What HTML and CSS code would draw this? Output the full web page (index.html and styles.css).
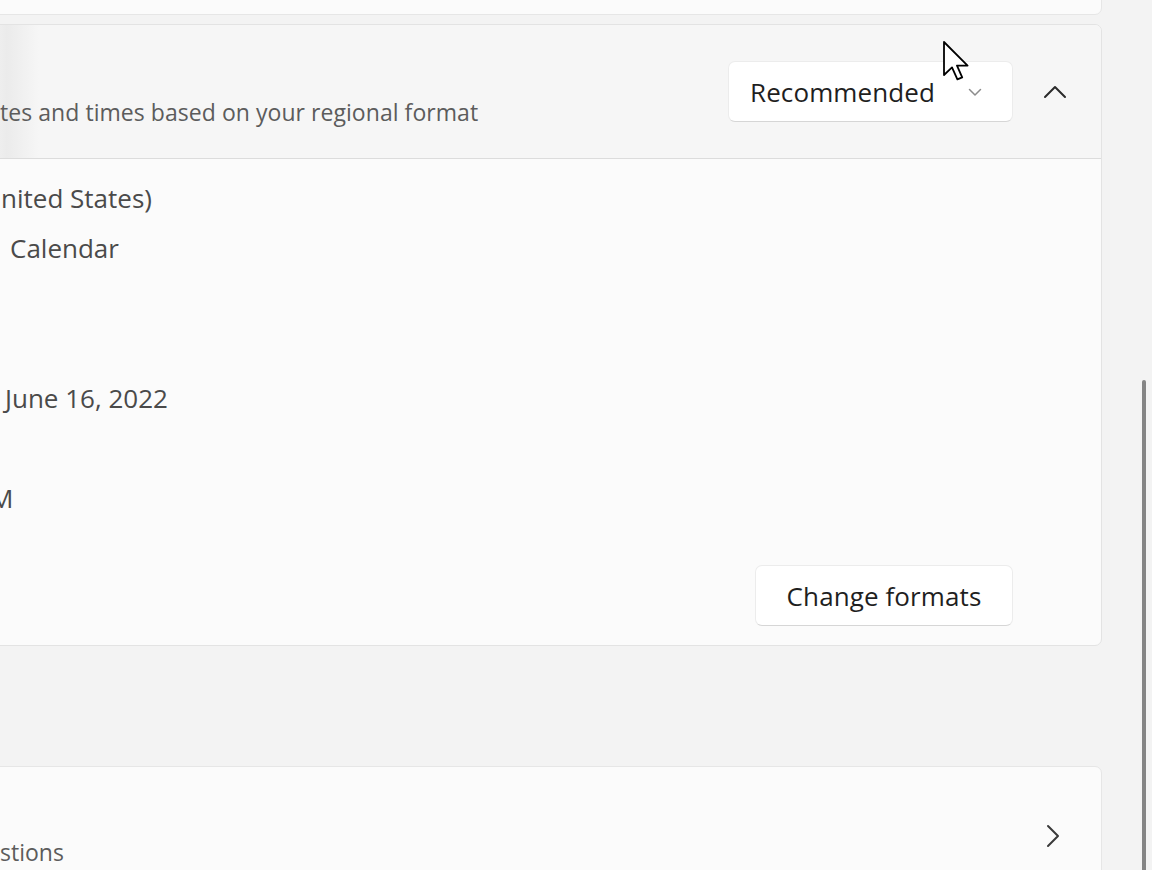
FILE: index.html
```html
<!DOCTYPE html>
<html lang="en">
<head>
<meta charset="utf-8">
<title>Region settings</title>
<link rel="stylesheet" href="styles.css">
</head>
<body>
<div class="column">
  <div class="card card-top"></div>

  <section class="expander">
    <div class="exp-header">
      <div class="exp-text">
        <div class="exp-sub">tes and times based on your regional format</div>
      </div>
      <div class="exp-actions">
        <button class="dropdown">
          <span class="dropdown-label">Recommended</span>
          <svg class="dd-chev" width="14" height="9" viewBox="0 0 14 9"><path d="M1.5 1.5 L7 7 L12.5 1.5" fill="none" stroke="#8c8c8c" stroke-width="1.5" stroke-linecap="round" stroke-linejoin="round"/></svg>
        </button>
        <span class="exp-toggle">
          <svg width="24" height="14" viewBox="0 0 24 14"><path d="M2 12 L12 2 L22 12" fill="none" stroke="#2b2b2b" stroke-width="2" stroke-linecap="round" stroke-linejoin="round"/></svg>
        </span>
      </div>
    </div>
    <div class="exp-body">
      <ul class="values">
        <li><span class="v v-region">nited States)</span></li>
        <li><span class="v v-cal">Calendar</span></li>
        <li><span class="v"></span></li>
        <li><span class="v"></span></li>
        <li><span class="v v-long">June 16, 2022</span></li>
        <li><span class="v"></span></li>
        <li><span class="v v-time">M</span></li>
      </ul>
      <div class="body-actions">
        <button class="btn">Change formats</button>
      </div>
    </div>
  </section>

  <section class="card card-link">
    <div class="link-text">
      <div class="link-sub">stions</div>
    </div>
    <svg class="link-chev" width="14" height="24" viewBox="0 0 14 24"><path d="M2 2 L12 12 L2 22" fill="none" stroke="#3a3a3a" stroke-width="2" stroke-linecap="round" stroke-linejoin="round"/></svg>
  </section>
</div>

<div class="scrollbar"></div>

<svg class="cursor" width="26" height="40" viewBox="0 0 13 20">
  <path d="M0.5 0.5 L0.5 17 L4.5 13.2 L7.2 19.2 L9.6 18.2 L7 12.3 L12.3 12.3 Z" fill="#ffffff" stroke="#000000" stroke-width="0.9" stroke-linejoin="round"/>
</svg>
</body>
</html>
```

FILE: styles.css
```css
html, body {
  margin: 0;
  padding: 0;
}

body {
  width: 1152px;
  height: 870px;
  overflow: hidden;
  background: #f3f3f3;
  font-family: "Open Sans", "Noto Sans", "Liberation Sans", sans-serif;
  color: #1b1b1b;
  position: relative;
}

.column {
  margin-left: -20px;
  width: 1122px;
  display: flex;
  flex-direction: column;
}

.card {
  background: #fbfbfb;
  border: 1px solid #e6e6e6;
  border-radius: 7px;
  box-sizing: border-box;
}

.card-top {
  height: 55px;
  margin-top: -40px;
}

.expander {
  margin-top: 9px;
  border: 1px solid #e3e3e3;
  border-radius: 7px;
  background: #fbfbfb;
  overflow: hidden;
}

.exp-header {
  height: 133px;
  background: linear-gradient(90deg, #f6f6f6 0px, #ebebeb 26px, #f6f6f6 58px, #f6f6f6 100%);
  border-bottom: 1px solid #dcdcdc;
  display: flex;
  align-items: center;
  justify-content: space-between;
  padding-right: 25px;
}

.exp-text {
  padding-left: 19px;
  padding-top: 40px;
}

.exp-sub {
  font-size: 23px;
  color: #5c5c5c;
  letter-spacing: 0.05px;
}

.exp-actions {
  display: flex;
  align-items: center;
  gap: 21px;
}

.dropdown {
  width: 285px;
  height: 61px;
  box-sizing: border-box;
  background: #ffffff;
  border: 1px solid #ececec;
  border-bottom-color: #d6d6d6;
  border-radius: 7px;
  display: flex;
  align-items: center;
  justify-content: space-between;
  padding: 0 30px 0 21px;
  font-family: inherit;
  cursor: default;
}

.dropdown-label {
  font-size: 26px;
  color: #1f1f1f;
  letter-spacing: 0.1px;
}

.dd-chev {
  margin-top: 1px;
}

.exp-toggle {
  width: 42px;
  height: 42px;
  display: flex;
  align-items: center;
  justify-content: center;
}

.exp-body {
  padding: 14px 88px 19px 0;
}

.values {
  list-style: none;
  margin: 0;
  padding: 0;
}

.values li {
  height: 50px;
  display: flex;
  align-items: center;
}

.v {
  font-size: 26px;
  color: #4a4a4a;
  padding-left: 20px;
}

.v-cal {
  padding-left: 29px;
}

.v-long {
  padding-left: 24px;
}

.v-time {
  padding-left: 9px;
}

.body-actions {
  display: flex;
  justify-content: flex-end;
  margin-top: 42px;
}

.btn {
  width: 258px;
  height: 61px;
  box-sizing: border-box;
  background: #ffffff;
  border: 1px solid #ececec;
  border-bottom-color: #d6d6d6;
  border-radius: 7px;
  font-family: inherit;
  font-size: 26px;
  color: #1f1f1f;
  letter-spacing: 0.1px;
  cursor: default;
}

.card-link {
  margin-top: 120px;
  height: 140px;
  display: flex;
  align-items: flex-start;
  justify-content: space-between;
  padding: 56px 41px 0 19px;
}

.link-text {
  padding-top: 13px;
}

.link-sub {
  font-size: 23px;
  color: #5c5c5c;
}

.link-chev {
  margin-top: 1px;
}

.scrollbar {
  position: absolute;
  left: 1142px;
  top: 380px;
  width: 4px;
  height: 520px;
  border-radius: 2px;
  background: #858585;
}

.cursor {
  position: absolute;
  left: 943px;
  top: 41px;
}
```
